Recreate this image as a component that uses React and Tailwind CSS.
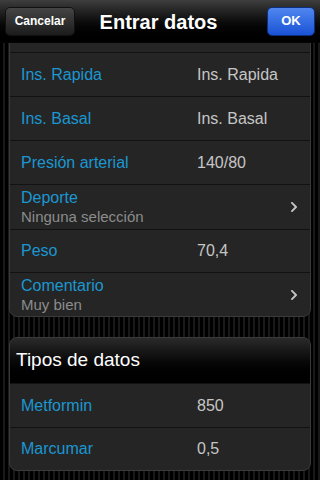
import { FaChevronRight } from "react-icons/fa";

const font = { fontFamily: '"Liberation Sans", Arial, sans-serif' };

function Row({ label, value, sub, chevron, h = "h-[44px]", first }) {
  return (
    <div
      className={`${h} flex items-center pl-[11px] pr-[12px] ${
        first ? "" : "border-t border-[#121212]"
      }`}
    >
      {sub ? (
        <div className="flex flex-col flex-1 leading-none">
          <span className="text-[16px] text-[#1b97d1]">{label}</span>
          <span className="text-[15px] text-[#8c8c8c] mt-[3px]">{sub}</span>
        </div>
      ) : (
        <>
          <span className="w-[176px] text-[16px] text-[#1b97d1]">{label}</span>
          <span className="flex-1 text-[16px] text-[#c6c6c6]">{value}</span>
        </>
      )}
      {chevron && <FaChevronRight className="text-[#c4c4c4] w-[8px] h-[12px]" />}
    </div>
  );
}

export default function App() {
  return (
    <div
      className="w-[320px] h-[480px] overflow-hidden flex flex-col bg-[repeating-linear-gradient(90deg,#000_0px,#000_3px,#191919_3px,#191919_5px)]"
      style={font}
    >
      {/* Nav bar */}
      <div className="h-[43px] shrink-0 flex items-center px-[5px] bg-gradient-to-b from-[#3e3e3e] via-[#0e0e0e] to-black border-b border-[#050505]">
        <div className="flex-1 flex">
          <button className="w-[70px] h-[29px] rounded-[5px] border border-[#111] bg-gradient-to-b from-[#454545] to-[#1c1c1c] text-white text-[12px] font-bold">
            Cancelar
          </button>
        </div>
        <div className="text-white text-[20px] font-bold pt-[2px] pr-[3px]">Entrar datos</div>
        <div className="flex-1 flex justify-end">
          <button className="w-[48px] h-[29px] rounded-[5px] border border-[#0c2f80] bg-gradient-to-b from-[#4f86f0] to-[#1a52d6] text-white text-[13px] font-bold">
            OK
          </button>
        </div>
      </div>

      <div className="flex-1 overflow-hidden">
        <div className="-mt-[36px] px-[9px]">
          <div className="rounded-[8px] border border-[#3a3a3a] bg-[#252525] overflow-hidden">
            <div className="h-[44px]" />
            <Row label="Ins. Rapida" value="Ins. Rapida" />
            <Row label="Ins. Basal" value="Ins. Basal" />
            <Row label="Presión arterial" value="140/80" />
            <Row label="Deporte" sub="Ninguna selección" chevron h="h-[45px]" />
            <Row label="Peso" value="70,4" h="h-[43px]" />
            <Row label="Comentario" sub="Muy bien" chevron h="h-[44px]" />
          </div>

          <div className="mt-[20px] rounded-[8px] border border-[#3a3a3a] bg-[#252525] overflow-hidden">
            <div className="h-[45px] flex items-center pl-[6px] text-white text-[19px] bg-gradient-to-b from-[#2a2a2a] via-[#0a0a0a] to-black">
              Tipos de datos
            </div>
            <Row label="Metformin" value="850" />
            <Row label="Marcumar" value="0,5" h="h-[43px]" />
          </div>
        </div>
      </div>
    </div>
  );
}
